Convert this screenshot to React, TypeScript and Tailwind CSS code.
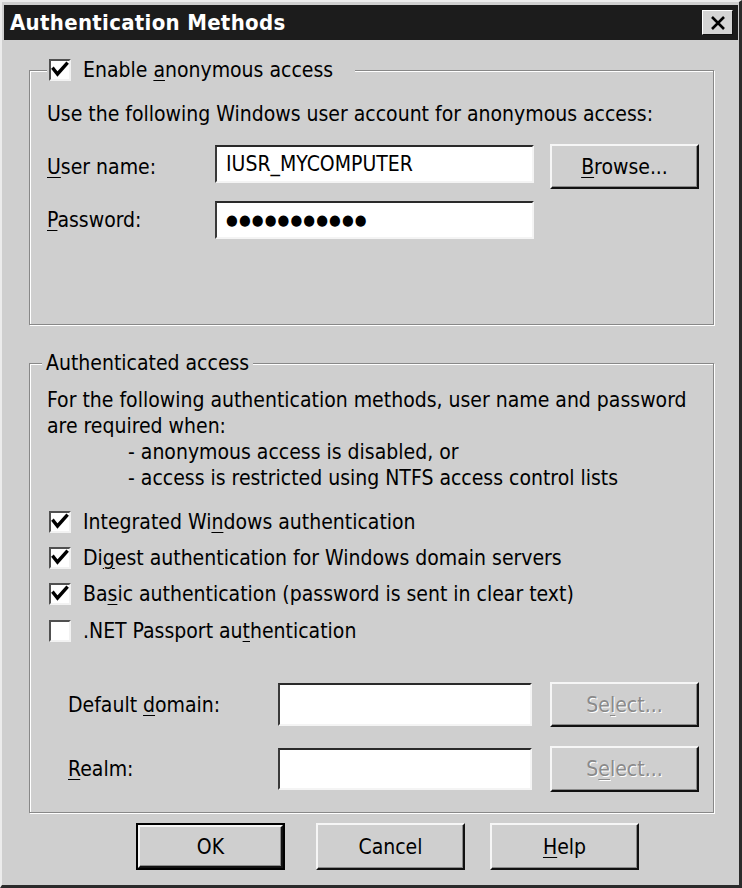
import type { ReactNode } from "react";

const font = "font-['DejaVu_Sans_Condensed','DejaVu_Sans',sans-serif] font-stretch-condensed";

function U({ children }: { children: ReactNode }) {
  return <span className="underline decoration-1 underline-offset-[3px]">{children}</span>;
}

function Check({ checked }: { checked: boolean }) {
  return (
    <span className="flex h-[22px] w-[22px] shrink-0 items-center justify-center border-2 border-b-[#f2f2f2] border-l-[#505050] border-r-[#f2f2f2] border-t-[#505050] bg-white">
      {checked && (
        <svg width="18" height="18" viewBox="0 0 18 18">
          <polyline
            points="2.5,8 6.5,13 15.5,3"
            fill="none"
            stroke="#000"
            strokeWidth="3.4"
            strokeLinecap="square"
          />
        </svg>
      )}
    </span>
  );
}

function Field({ width, height, children }: { width: string; height: string; children?: ReactNode }) {
  return (
    <div
      className={`flex items-center border-2 border-b-[#f4f4f4] border-l-[#3a3a3a] border-r-[#f4f4f4] border-t-[#2a2a2a] bg-white pl-[9px] ${width} ${height}`}
    >
      {children}
    </div>
  );
}

function Button({ children, disabled }: { children: ReactNode; disabled?: boolean }) {
  return (
    <div className="flex h-full w-full items-center justify-center border-2 border-b-[#111] border-l-[#f6f6f6] border-r-[#111] border-t-[#f6f6f6] shadow-[inset_-1px_-1px_0_#8a8a8a]">
      <span
        className={
          disabled
            ? "text-[#8a8a8a] [text-shadow:1px_1px_0_#fff]"
            : "text-black"
        }
      >
        {children}
      </span>
    </div>
  );
}

export default function App() {
  return (
    <div
      className={`${font} flex h-[888px] w-[742px] flex-col border-b-[3px] border-l-2 border-r-[3px] border-t-2 border-b-[#2b2b2b] border-l-[#ececec] border-r-[#2b2b2b] border-t-[#ececec] bg-[#cfcfcf] text-[21px] leading-[26px] text-black`}
    >
      {/* title bar */}
      <div className="ml-[2px] mr-[1px] mt-[3px] flex h-[35px] items-center justify-between bg-[#1c1c1c] pl-[6px] pr-[5px]">
        <span className="text-[22px] font-bold tracking-[0.3px] text-white">Authentication Methods</span>
        <div className="flex h-[25px] w-[31px] items-center justify-center border border-b-[#111] border-l-white border-r-[#111] border-t-white bg-[#d4d4d4]">
          <svg width="16" height="14" viewBox="0 0 16 14">
            <path d="M2 1 L14 13 M14 1 L2 13" stroke="#000" strokeWidth="2.6" />
          </svg>
        </div>
      </div>

      {/* anonymous access group */}
      <div className="ml-[27px] mt-[30px] flex h-[255px] w-[685px] flex-col border border-[#888] shadow-[inset_1px_1px_0_#fff,1px_1px_0_#fff]">
        <div className="-mt-[14px] ml-[17px] flex h-[26px] items-center gap-[12px] self-start bg-[#cfcfcf] pl-[2px] pr-[22px]">
          <Check checked />
          <span>
            Enable <U>a</U>nonymous access
          </span>
        </div>

        <div className="flex flex-col pl-[17px]">
          <p className="mt-[18px]">Use the following Windows user account for anonymous access:</p>

          <div className="mt-[17px] flex h-[45px] items-start">
            <span className="mt-[10px] w-[168px]">
              <U>U</U>ser name:
            </span>
            <div className="mt-[1px]">
              <Field width="w-[319px]" height="h-[38px]">
                IUSR_MYCOMPUTER
              </Field>
            </div>
            <div className="ml-[16px] h-[45px] w-[149px]">
              <Button>
                <U>B</U>rowse...
              </Button>
            </div>
          </div>

          <div className="mt-[12px] flex items-center">
            <span className="w-[168px]">
              <U>P</U>assword:
            </span>
            <Field width="w-[319px]" height="h-[38px]">
              <span className="text-[15px] tracking-[1.1px]">●●●●●●●●●●●</span>
            </Field>
          </div>
        </div>
      </div>

      {/* authenticated access group */}
      <div className="ml-[27px] mt-[38px] flex h-[450px] w-[685px] flex-col border border-[#888] shadow-[inset_1px_1px_0_#fff,1px_1px_0_#fff]">
        <div className="-mt-[14px] ml-[12px] flex h-[26px] items-center self-start bg-[#cfcfcf] px-[4px]">
          Authenticated access
        </div>

        <div className="flex flex-col pl-[17px]">
          <p className="mt-[11px]">For the following authentication methods, user name and password</p>
          <p>are required when:</p>
          <p className="pl-[81px]">- anonymous access is disabled, or</p>
          <p className="pl-[81px]">- access is restricted using NTFS access control lists</p>

          <div className="mt-[13px] flex flex-col">
            <div className="flex h-[36px] items-center gap-[12px] pl-[2px]">
              <Check checked />
              <span>
                Integrated Wi<U>n</U>dows authentication
              </span>
            </div>
            <div className="flex h-[36px] items-center gap-[12px] pl-[2px]">
              <Check checked />
              <span>
                Di<U>g</U>est authentication for Windows domain servers
              </span>
            </div>
            <div className="flex h-[36px] items-center gap-[12px] pl-[2px]">
              <Check checked />
              <span>
                Ba<U>s</U>ic authentication (password is sent in clear text)
              </span>
            </div>
            <div className="flex h-[38px] items-center gap-[12px] pl-[2px]">
              <Check checked={false} />
              <span>
                .NET Passport au<U>t</U>hentication
              </span>
            </div>
          </div>

          <div className="mt-[32px] flex h-[45px] items-center">
            <span className="w-[231px] pl-[21px]">
              Default <U>d</U>omain:
            </span>
            <Field width="w-[254px]" height="h-[43px]" />
            <div className="ml-[18px] h-[45px] w-[149px]">
              <Button disabled>
                Se<U>l</U>ect...
              </Button>
            </div>
          </div>

          <div className="mt-[19px] flex h-[46px] items-center">
            <span className="w-[231px] pl-[21px]">
              <U>R</U>ealm:
            </span>
            <Field width="w-[254px]" height="h-[42px]" />
            <div className="ml-[18px] h-[46px] w-[149px]">
              <Button disabled>
                S<U>e</U>lect...
              </Button>
            </div>
          </div>
        </div>
      </div>

      {/* dialog buttons */}
      <div className="mt-[10px] flex h-[47px] pl-[134px]">
        <div className="h-[47px] w-[149px] border-2 border-black">
          <Button>OK</Button>
        </div>
        <div className="ml-[31px] h-[47px] w-[149px]">
          <Button>Cancel</Button>
        </div>
        <div className="ml-[25px] h-[47px] w-[149px]">
          <Button>
            <U>H</U>elp
          </Button>
        </div>
      </div>
    </div>
  );
}
